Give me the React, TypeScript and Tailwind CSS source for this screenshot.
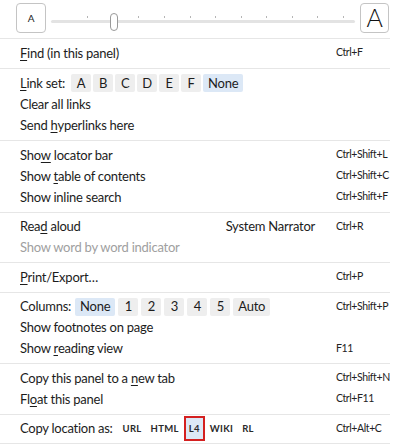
import React from "react";

const font = { fontFamily: "Lato, 'Liberation Sans', sans-serif" };

function U({ children }: { children: React.ReactNode }) {
  return <span className="underline underline-offset-2">{children}</span>;
}

function Keys({ children }: { children?: React.ReactNode }) {
  return <div className="w-[54px] text-[10.5px] tracking-[-0.4px] text-[#222] whitespace-nowrap">{children}</div>;
}

function Row({
  children,
  keys,
  muted,
}: {
  children: React.ReactNode;
  keys?: string;
  muted?: boolean;
}) {
  return (
    <div className="flex items-center h-[21px] pl-5">
      <div className={"flex-1 flex items-center " + (muted ? "text-[#a0a0a0]" : "text-[#1c1c1c]")}>
        {children}
      </div>
      <Keys>{keys}</Keys>
    </div>
  );
}

function Section({ children }: { children: React.ReactNode }) {
  return <div className="border-t border-[#e6e6e6] py-[3.75px] mr-[5px]">{children}</div>;
}

function Chip({ label, active }: { label: string; active?: boolean }) {
  return (
    <span
      className={
        "h-[18px] min-w-[20px] px-[5px] flex items-center justify-center rounded-[2px] " +
        (active ? "bg-[#dce8f6]" : "bg-[#eeeeee]")
      }
    >
      {label}
    </span>
  );
}

function Slider() {
  const ticks = [87, 113, 138, 164, 190, 215, 241, 266, 292, 317, 343];
  return (
    <div className="flex-1 relative h-[38px] mx-[5px]">
      <div className="absolute left-0 right-0 top-[17px] h-[3px] rounded-full bg-[#e3e3e3]" />
      {ticks.map((x) => (
        <div key={x} className="absolute top-[13px] w-px h-[2px] bg-[#b5b5b5]" style={{ left: x - 51 }} />
      ))}
      <div className="absolute left-[59px] top-[10px] w-[8px] h-[18px] rounded-full bg-white border border-[#9a9a9a]" />
    </div>
  );
}

export default function App() {
  return (
    <div className="w-[395px] h-[444px] bg-white overflow-hidden text-[13px] tracking-[-0.25px]" style={font}>
      <div className="flex items-start h-[38px] pl-4 pr-[6px] pt-[3px]">
        <div className="w-[30px] h-[30px] border border-[#c4c4c4] rounded-[4px] flex items-center justify-center text-[10px] text-[#222]">
          A
        </div>
        <Slider />
        <div className="w-[29px] h-[30px] border border-[#c4c4c4] rounded-[4px] flex items-center justify-center text-[25px] font-light text-[#111]">
          A
        </div>
      </div>

      <Section>
        <Row keys="Ctrl+F">
          <U>F</U>ind (in this panel)
        </Row>
      </Section>

      <Section>
        <div className="flex items-center h-[22px] pl-5">
          <span className="text-[#1c1c1c] mr-[6px]">
            <U>L</U>ink set:
          </span>
          <div className="flex gap-[2px] text-[#1c1c1c]">
            {["A", "B", "C", "D", "E", "F"].map((l) => (
              <Chip key={l} label={l} />
            ))}
            <Chip label="None" active />
          </div>
        </div>
        <Row>Clear all links</Row>
        <Row>
          Send&nbsp;<U>h</U>yperlinks here
        </Row>
      </Section>

      <Section>
        <Row keys="Ctrl+Shift+L">
          Sho<U>w</U>&nbsp;locator bar
        </Row>
        <Row keys="Ctrl+Shift+C">
          Show&nbsp;<U>t</U>able of contents
        </Row>
        <Row keys="Ctrl+Shift+F">Show inline search</Row>
      </Section>

      <Section>
        <div className="flex items-center h-[21px] pl-5">
          <div className="flex-1 text-[#1c1c1c]">
            Rea<U>d</U> aloud
          </div>
          <span className="text-[#1c1c1c] mr-[21px]">System Narrator</span>
          <Keys>Ctrl+R</Keys>
        </div>
        <Row muted>Show word by word indicator</Row>
      </Section>

      <Section>
        <Row keys="Ctrl+P">
          <U>P</U>rint/Export…
        </Row>
      </Section>

      <Section>
        <div className="flex items-center h-[21px] pl-5">
          <div className="flex-1 flex items-center text-[#1c1c1c]">
            <span className="mr-[4px]">Columns:</span>
            <div className="flex gap-[3px]">
              <Chip label="None" active />
              {["1", "2", "3", "4", "5", "Auto"].map((l) => (
                <Chip key={l} label={l} />
              ))}
            </div>
          </div>
          <Keys>Ctrl+Shift+P</Keys>
        </div>
        <Row>Show footnotes on page</Row>
        <Row keys="F11">
          Show&nbsp;<U>r</U>eading view
        </Row>
      </Section>

      <Section>
        <Row keys="Ctrl+Shift+N">
          Copy this panel to a&nbsp;<U>n</U>ew tab
        </Row>
        <Row keys="Ctrl+F11">
          Fl<U>o</U>at this panel
        </Row>
      </Section>

      <Section>
        <div className="flex items-center h-[21px] pl-5">
          <div className="flex-1 flex items-center text-[#1c1c1c]">
            <span className="mr-[6px]">Copy location as:</span>
            <div className="flex items-center gap-[1px] text-[9.5px] font-bold text-[#2a2a2a] tracking-[0.3px]">
              {["URL", "HTML"].map((l) => (
                <span key={l} className="px-[4px] h-[21px] flex items-center">
                  {l}
                </span>
              ))}
              <span className="px-[3px] h-[25px] flex items-center bg-[#dce8f6] border-2 border-[#d42020]">L4</span>
              {["WIKI", "RL"].map((l) => (
                <span key={l} className="px-[4px] h-[21px] flex items-center">
                  {l}
                </span>
              ))}
            </div>
          </div>
          <Keys>Ctrl+Alt+C</Keys>
        </div>
      </Section>
      <div className="border-t border-[#e6e6e6] mr-[5px]" />
    </div>
  );
}
